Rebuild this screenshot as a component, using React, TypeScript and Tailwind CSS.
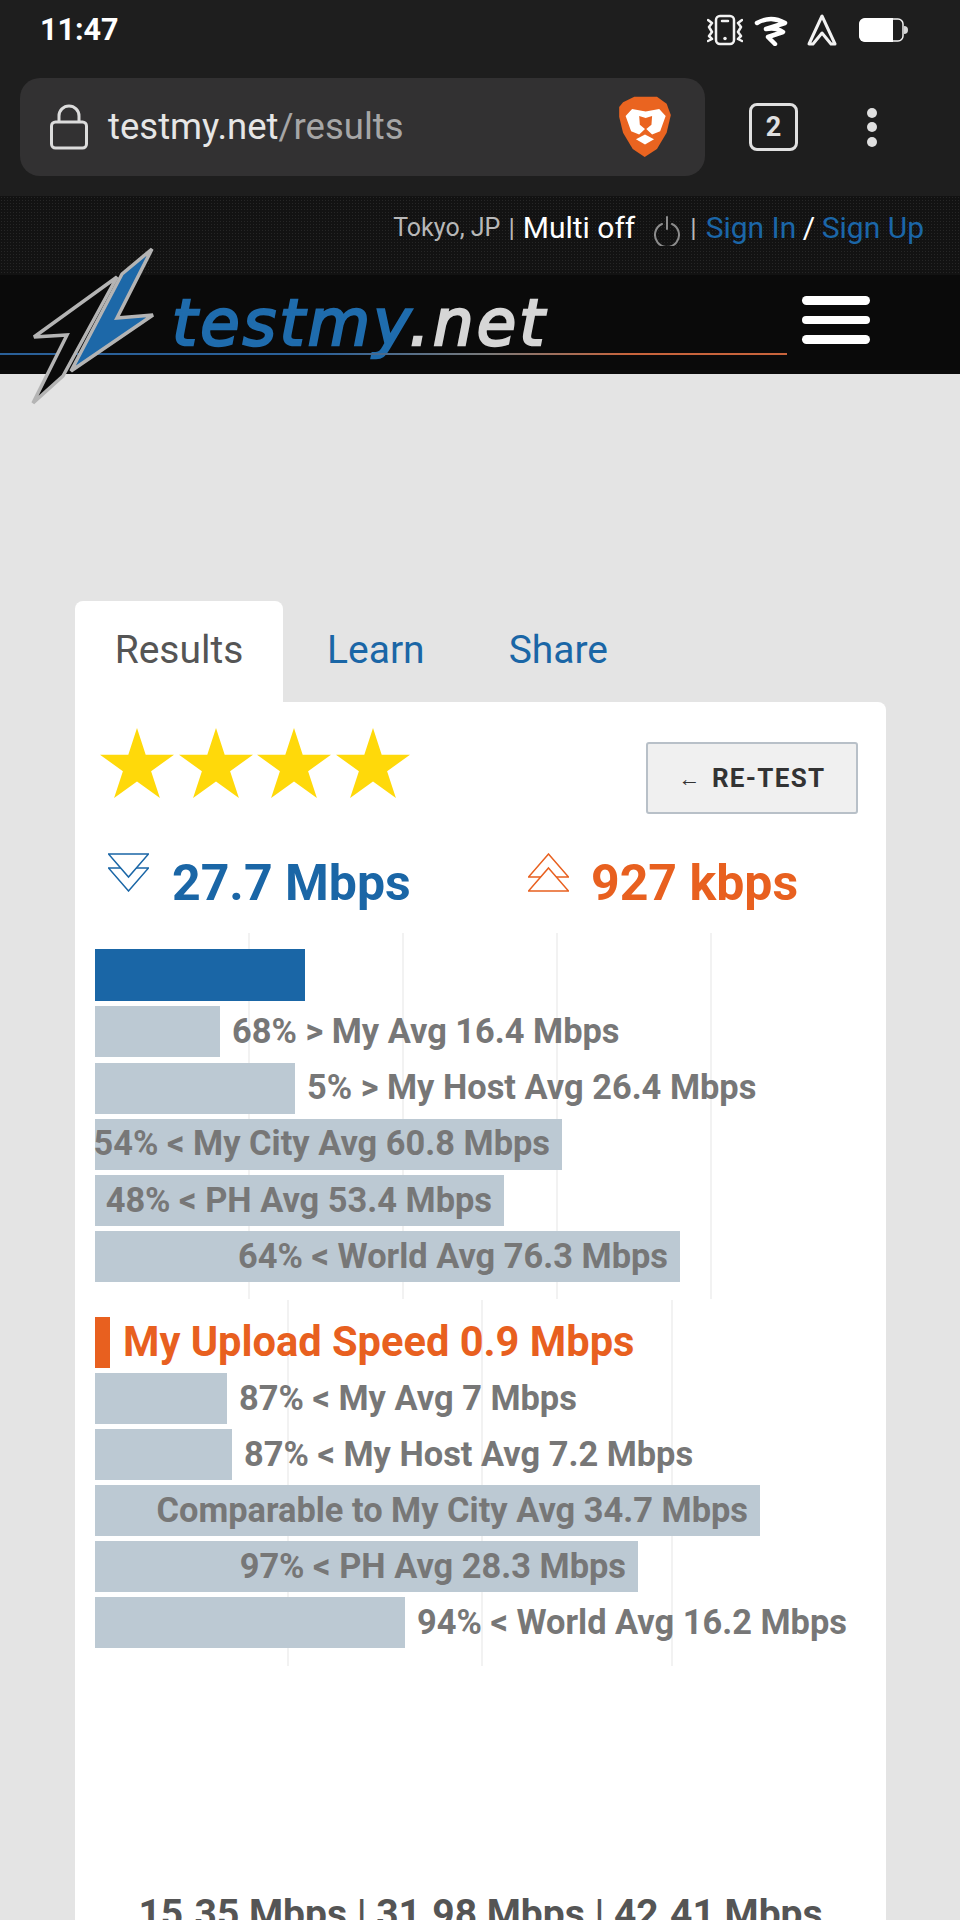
const downloadBars = [
  { width: 125, label: '68% > My Avg 16.4 Mbps', inside: false },
  { width: 200, label: '5% > My Host Avg 26.4 Mbps', inside: false },
  { width: 467, label: '54% < My City Avg 60.8 Mbps', inside: true },
  { width: 409, label: '48% < PH Avg 53.4 Mbps', inside: true },
  { width: 585, label: '64% < World Avg 76.3 Mbps', inside: true },
]

const uploadBars = [
  { width: 132, label: '87% < My Avg 7 Mbps', inside: false },
  { width: 137, label: '87% < My Host Avg 7.2 Mbps', inside: false },
  { width: 665, label: 'Comparable to My City Avg 34.7 Mbps', inside: true },
  { width: 543, label: '97% < PH Avg 28.3 Mbps', inside: true },
  { width: 310, label: '94% < World Avg 16.2 Mbps', inside: false },
]

function Bar({ width, label, inside }: { width: number; label: string; inside: boolean }) {
  return (
    <div className="relative z-10 flex h-[51px] items-center">
      <div
        className="flex h-full shrink-0 items-center justify-end bg-[#bcc9d3] pr-[12px]"
        style={{ width }}
      >
        {inside && <span className="whitespace-nowrap text-[34.4px] font-bold text-[#777777]">{label}</span>}
      </div>
      {!inside && <span className="ml-[12px] whitespace-nowrap text-[34.4px] font-bold text-[#777777]">{label}</span>}
    </div>
  )
}

function Chart({ lines, className, children }: { lines: number[]; className: string; children: React.ReactNode }) {
  return (
    <div className={`relative ml-[20px] flex h-[366px] flex-col ${className}`}>
      {lines.map((left) => (
        <div key={left} className="absolute top-0 bottom-0 w-[2px] bg-[#f2f2f2]" style={{ left }} />
      ))}
      {children}
    </div>
  )
}

function Star() {
  return (
    <svg viewBox="0 0 74 70" className="h-[70px] w-[74px] shrink-0" fill="#ffd90a">
      <polygon points="37,0 45.7,26.7 74,26.7 51.1,43.3 59.9,70 37,53.5 14.1,70 22.9,43.3 0,26.7 28.3,26.7" />
    </svg>
  )
}

function StatusIcons() {
  return (
    <div className="flex items-center">
      {/* vibrate */}
      <svg viewBox="0 0 36 32" className="h-[32px] w-[36px]" fill="none" stroke="#f2f2f2" strokeWidth="2.5" strokeLinecap="round" strokeLinejoin="round">
        <rect x="9" y="2" width="18" height="28" rx="4" />
        <path d="M15 7h6" />
        <path d="M18 24.5v.1" strokeWidth="3.5" />
        <path d="M1 6l4 3-3 4 3 5-3 4 3 3-4 2" />
        <path d="M35 6l-4 3 3 4-3 5 3 4-3 3 4 2" />
      </svg>
      {/* wifi */}
      <svg viewBox="0 0 34 32" className="ml-[11px] h-[32px] w-[34px]" fill="none" stroke="#ffffff" strokeWidth="4.5" strokeLinecap="round" strokeLinejoin="round">
        <path d="M3 9Q17 1 31 9L12 15Q22 13 29 18L14 23L21 30" />
      </svg>
      {/* auto */}
      <svg viewBox="0 0 32 32" className="ml-[18px] h-[32px] w-[32px]" fill="none" stroke="#f2f2f2" strokeWidth="3" strokeLinejoin="round">
        <path d="M16 2L3 30H7L16 19L25 30H29Z" />
      </svg>
      {/* battery */}
      <svg viewBox="0 0 49 24" className="ml-[21px] h-[24px] w-[49px]" fill="none">
        <rect x="1" y="1" width="43" height="22" rx="5" stroke="#f2f2f2" strokeWidth="1.5" />
        <path d="M6 0h28v24H6a6 6 0 0 1-6-6V6a6 6 0 0 1 6-6z" fill="#ffffff" />
        <path d="M45 8a4 4 0 0 1 0 8z" fill="#d8d8d8" />
      </svg>
    </div>
  )
}

function BraveIcon() {
  return (
    <svg viewBox="86 16 164 192" className="h-[62px] w-[54px]">
      <polygon
        fill="#ea6420"
        points="88,50 100,35 135,18 205,18 235,40 248,75 235,130 205,180 167,205 130,180 100,130 88,80"
      />
      <polygon
        fill="#ffffff"
        points="108,78 128,56 170,64 212,56 232,78 215,125 190,135 172,118 188,105 190,78 170,84 150,78 152,105 168,118 150,135 125,125"
      />
      <polygon fill="#ffffff" points="140,150 168,135 196,150 168,166" />
    </svg>
  )
}

function Logo() {
  return (
    <svg viewBox="0 0 160 170" className="absolute top-[-30px] left-0 z-20 h-[170px] w-[160px]" strokeLinejoin="miter" strokeMiterlimit="3">
      <polygon
        points="152,4 122,29 71,126 153,70 117,73"
        fill="#1d68a8"
        stroke="#b4b4b4"
        strokeWidth="3.5"
      />
      <polygon points="117,32 34,92 67,90 33,158 63,131" fill="#0a0a0a" stroke="#b4b4b4" strokeWidth="3.5" />
    </svg>
  )
}

export default function App() {
  return (
    <div className="flex h-[1920px] flex-col overflow-hidden bg-[#e4e4e4] font-['Roboto',sans-serif]">
      {/* Phone status bar + browser bar */}
      <div className="h-[196px] shrink-0 bg-[#1e1e1e]">
        <div className="flex h-[78px] items-start justify-between pt-[14px] pr-[52px] pl-[40px]">
          <span className="text-[30.5px] leading-[31px] font-bold text-white">11:47</span>
          <StatusIcons />
        </div>
        <div className="flex items-center">
          <div className="ml-[20px] flex h-[98px] w-[685px] items-center rounded-[20px] bg-[#323132] pr-[33px] pl-[30px]">
            <svg viewBox="0 0 38 46" className="h-[46px] w-[38px]" fill="none" stroke="#dcdcdc" strokeWidth="3">
              <rect x="1.5" y="18" width="35" height="26" rx="4" />
              <path d="M9 18V12a10 10 0 0 1 20 0v6" />
            </svg>
            <span className="mt-[1px] ml-[20px] text-[36.5px] text-[#e6e6e6]">
              testmy.net<span className="text-[#a6a6a6]">/results</span>
            </span>
            <div className="ml-auto">
              <BraveIcon />
            </div>
          </div>
          <div className="ml-[44px] flex h-[48px] w-[49px] items-center justify-center rounded-[8px] border-[3px] border-[#e0e0e0] text-[27px] font-bold text-[#e0e0e0]">
            2
          </div>
          <div className="ml-[69px] flex flex-col gap-[4.5px]">
            <div className="h-[10px] w-[10px] rounded-full bg-[#e0e0e0]" />
            <div className="h-[10px] w-[10px] rounded-full bg-[#e0e0e0]" />
            <div className="h-[10px] w-[10px] rounded-full bg-[#e0e0e0]" />
          </div>
        </div>
      </div>

      {/* Site top strip */}
      <div className="flex h-[79px] shrink-0 items-start justify-end bg-[#121212] bg-[radial-gradient(#262626_1px,transparent_1px)] bg-[length:3px_3px] pt-[14px] pr-[36px]">
        <div className="flex items-center leading-[36px] whitespace-nowrap">
          <span className="text-[25px] text-[#b8b8b8]">Tokyo, JP</span>
          <span className="mx-[8px] text-[26px] text-[#b8b8b8]">|</span>
          <span className="text-[30px] text-white">Multi off</span>
          <svg viewBox="0 0 28 30" className="mt-[6px] ml-[18px] h-[30px] w-[28px]" fill="none" stroke="#8c8c8c" strokeWidth="2" strokeLinecap="round">
            <path d="M9 8a12 12 0 1 0 10 0" />
            <path d="M14 1v12" />
          </svg>
          <span className="mx-[9px] text-[26px] text-[#b8b8b8]">|</span>
          <span className="text-[30px] text-[#1b66a8]">Sign In</span>
          <span className="mx-[6.5px] text-[30px] text-white">/</span>
          <span className="text-[30px] text-[#1b66a8]">Sign Up</span>
        </div>
      </div>

      {/* Logo bar */}
      <div className="relative flex h-[99px] shrink-0 items-start bg-[#0a0a0a]">
        <Logo />
        <span className="ml-[172px] font-['DejaVu_Sans',sans-serif] text-[64px] leading-[96px] tracking-[3.2px] italic [-webkit-text-stroke:2.5px]">
          <span className="text-[#1f6cad]">testmy</span>
          <span className="text-[#d6d6d6]">.net</span>
        </span>
        <div className="absolute top-[78px] left-0 h-[2px] w-[787px] bg-[linear-gradient(90deg,#2a6099_0%,#2a6099_40%,#7a7a7a_62%,#c8643c_80%,#c8643c_100%)]" />
        <div className="absolute top-[21px] left-[802px] flex w-[68px] flex-col gap-[11px]">
          <div className="h-[8.5px] rounded-full bg-white" />
          <div className="h-[8.5px] rounded-full bg-white" />
          <div className="h-[8.5px] rounded-full bg-white" />
        </div>
      </div>

      {/* Content */}
      <div className="ml-[75px] flex w-[811px] flex-1 flex-col pt-[227px]">
        <div className="flex h-[101px] shrink-0 text-[39px]">
          <div className="flex h-full w-[208px] items-start justify-center rounded-t-[8px] bg-white pt-[26px] leading-[46px] text-[#555555]">
            Results
          </div>
          <div className="ml-[44px] pt-[26px] leading-[46px] text-[#1a66a6]">Learn</div>
          <div className="ml-[84px] pt-[26px] leading-[46px] text-[#1a66a6]">Share</div>
        </div>

        <div className="flex-1 rounded-tr-[8px] bg-white pt-[26px]">
          <div className="flex items-start justify-between pr-[28px] pl-[25px]">
            <div className="flex gap-[4.5px]">
              <Star />
              <Star />
              <Star />
              <Star />
            </div>
            <button className="mt-[14px] flex h-[72px] w-[212px] items-center justify-center rounded-[3px] border-2 border-[#b8c0c8] bg-[#f0f0f0] text-[26px] font-bold tracking-[1.3px] text-[#333333]">
              <span className="mr-[10px] text-[22px] font-normal">←</span>RE-TEST
            </button>
          </div>

          <div className="mt-[39px] flex h-[80px] items-start">
            <div className="ml-[33px] flex w-[420px] items-start">
              <svg viewBox="0 0 41 39" className="h-[39px] w-[41px] shrink-0" fill="#ffffff" stroke="#1a66a6" strokeWidth="1.5">
                <path d="M0.5 15H40.5L20.5 38Z" />
                <path d="M0.5 1H40.5L20.5 24Z" />
              </svg>
              <span className="mt-[-1px] ml-[23px] text-[50px] leading-[62px] font-bold text-[#1a66a6]">27.7 Mbps</span>
            </div>
            <div className="flex items-start">
              <svg viewBox="0 0 41 39" className="h-[39px] w-[41px] shrink-0" fill="#ffffff" stroke="#e8601f" strokeWidth="1.5">
                <path d="M20.5 1L40.5 24H0.5Z" />
                <path d="M20.5 15L40.5 38H0.5Z" />
              </svg>
              <span className="mt-[-1px] ml-[22px] text-[50px] leading-[62px] font-bold text-[#e8601f]">927 kbps</span>
            </div>
          </div>

          <Chart lines={[153, 307, 461, 615]} className="gap-[5.25px] pt-[16px]">
            <div className="relative z-10 h-[52px] w-[210px] bg-[#1a66a6]" />
            {downloadBars.map((bar) => (
              <Bar key={bar.label} {...bar} />
            ))}
          </Chart>

          <Chart lines={[192, 386, 576]} className="mt-[1px] gap-[5px] pt-[17px]">
            <div className="relative z-10 flex h-[51px] items-center">
              <div className="h-full w-[15px] bg-[#e8601f]" />
              <span className="ml-[13px] text-[41.6px] font-bold whitespace-nowrap text-[#e8601f]">My Upload Speed 0.9 Mbps</span>
            </div>
            {uploadBars.map((bar) => (
              <Bar key={bar.label} {...bar} />
            ))}
          </Chart>

          <div className="mt-[226px] text-center text-[39px] leading-[44px] font-bold text-[#555555]">
            15.35 Mbps | 31.98 Mbps | 42.41 Mbps
          </div>
        </div>
      </div>
    </div>
  )
}
